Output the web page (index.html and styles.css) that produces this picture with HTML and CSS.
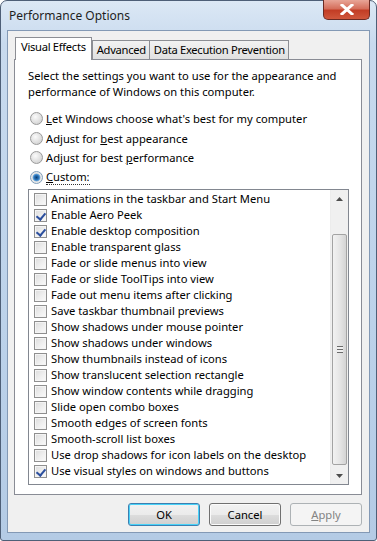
FILE: index.html
```html
<!DOCTYPE html>
<html lang="en">
<head>
    <meta charset="UTF-8">
    <title>Performance Options</title>
    <link rel="stylesheet" href="styles.css">
</head>
<body>
    <div class="window">
        <div class="titlebar">
            <span class="title">Performance Options</span>
            <div class="close">
                <svg width="14" height="11" viewBox="0 0 14 11"><path d="M2 1 L12 10 M12 1 L2 10" stroke="#fff" stroke-width="3" stroke-linecap="square"/></svg>
            </div>
        </div>
        <div class="client">
            <div class="tabs">
                <div class="tab active">Visual Effects</div>
                <div class="tab">Advanced</div>
                <div class="tab">Data Execution Prevention</div>
            </div>
            <div class="panel">
                <p class="intro">Select the settings you want to use for the appearance and performance of Windows on this computer.</p>
                <div class="radios">
                    <label class="radio"><span class="dot"></span><span><u>L</u>et Windows choose what's best for my computer</span></label>
                    <label class="radio"><span class="dot"></span><span>Adjust for <u>b</u>est appearance</span></label>
                    <label class="radio"><span class="dot"></span><span>Adjust for best <u>p</u>erformance</span></label>
                    <label class="radio on"><span class="dot"></span><span class="focus"><u>C</u>ustom:</span></label>
                </div>
                <div class="listbox">
                    <ul class="items">
                        <li><span class="box"></span>Animations in the taskbar and Start Menu</li>
                        <li class="checked"><span class="box"></span>Enable Aero Peek</li>
                        <li class="checked"><span class="box"></span>Enable desktop composition</li>
                        <li><span class="box"></span>Enable transparent glass</li>
                        <li><span class="box"></span>Fade or slide menus into view</li>
                        <li><span class="box"></span>Fade or slide ToolTips into view</li>
                        <li><span class="box"></span>Fade out menu items after clicking</li>
                        <li><span class="box"></span>Save taskbar thumbnail previews</li>
                        <li><span class="box"></span>Show shadows under mouse pointer</li>
                        <li><span class="box"></span>Show shadows under windows</li>
                        <li><span class="box"></span>Show thumbnails instead of icons</li>
                        <li><span class="box"></span>Show translucent selection rectangle</li>
                        <li><span class="box"></span>Show window contents while dragging</li>
                        <li><span class="box"></span>Slide open combo boxes</li>
                        <li><span class="box"></span>Smooth edges of screen fonts</li>
                        <li><span class="box"></span>Smooth-scroll list boxes</li>
                        <li><span class="box"></span>Use drop shadows for icon labels on the desktop</li>
                        <li class="checked"><span class="box"></span>Use visual styles on windows and buttons</li>
                    </ul>
                    <div class="scrollbar">
                        <div class="arrow"><svg width="7" height="4" viewBox="0 0 7 4"><path d="M0 4 L3.5 0 L7 4 Z" fill="#4d4d4d"/></svg></div>
                        <div class="track">
                            <div class="thumb">
                                <span class="grip"></span>
                            </div>
                        </div>
                        <div class="arrow"><svg width="7" height="4" viewBox="0 0 7 4"><path d="M0 0 L3.5 4 L7 0 Z" fill="#4d4d4d"/></svg></div>
                    </div>
                </div>
            </div>
            <div class="buttons">
                <button class="btn default">OK</button>
                <button class="btn">Cancel</button>
                <button class="btn disabled"><u>A</u>pply</button>
            </div>
        </div>
    </div>
</body>
</html>
```

FILE: styles.css
```css
html, body {
    margin: 0;
    padding: 0;
}
body {
    width: 377px;
    height: 541px;
    overflow: hidden;
    font-family: "Noto Sans", "Open Sans", sans-serif;
    font-size: 11.2px;
    color: #000;
    background: #fff;
}
.window {
    box-sizing: border-box;
    width: 377px;
    height: 541px;
    border: 1px solid #4e5f77;
    border-radius: 7px 7px 3px 3px;
    background: linear-gradient(180deg, #dce8f5 0%, #c8daee 8%, #bcd2ea 60%, #b4cbe5 100%);
    padding: 0 6px 7px 6px;
    display: flex;
    flex-direction: column;
}
.titlebar {
    height: 29px;
    display: flex;
    justify-content: space-between;
    align-items: flex-start;
}
.title {
    margin: 6px 0 0 2px;
    font-size: 12px;
    color: #1e1e1e;
}
.close {
    width: 45px;
    height: 19px;
    margin-top: -1px;
    border: 1px solid #6b2a23;
    border-top: none;
    border-radius: 0 0 5px 5px;
    background: linear-gradient(180deg, #e8a597 0%, #d56f5c 45%, #c23d25 55%, #d0573c 100%);
    display: flex;
    align-items: center;
    justify-content: center;
}
.client {
    flex: 1;
    border: 1px solid #8399b5;
    background: #f0f0f0;
    padding: 6px 7px 0 6px;
    display: flex;
    flex-direction: column;
}
.tabs {
    display: flex;
    align-items: flex-end;
    padding-left: 1px;
    height: 22px;
    position: relative;
    z-index: 1;
    letter-spacing: -0.3px;
}
.tab {
    height: 18px;
    padding: 0 3px 0 4px;
    border: 1px solid #8c8e94;
    border-bottom: none;
    margin-left: -1px;
    background: linear-gradient(180deg, #f2f2f2, #e0e0e0);
    line-height: 18px;
}
.tab.active {
    height: 22px;
    padding: 0 5px 0 5px;
    margin-left: 0;
    margin-right: 1px;
    background: #fff;
    line-height: 18px;
    margin-bottom: -1px;
}
.panel {
    height: 434px;
    background: #fff;
    border: 1px solid #898c95;
    padding: 0 12px 0 13px;
}
.intro {
    margin: 8px 0 0 0;
    line-height: 16px;
}
.radios {
    margin-top: 9px;
    display: flex;
    flex-direction: column;
}
.radio {
    height: 19.5px;
    display: flex;
    align-items: center;
    padding-left: 2px;
}
.dot {
    box-sizing: border-box;
    width: 13px;
    height: 13px;
    border-radius: 50%;
    border: 1px solid #9a9a9a;
    background: radial-gradient(circle at 40% 35%, #fbfbfb 0%, #d8d8d8 70%, #c4c4c4 100%);
    margin-right: 3px;
}
.radio.on .dot {
    background: radial-gradient(circle, #0c3e71 0%, #2a74bb 30%, #6aa6d9 45%, #e6e6e6 55%, #f5f5f5 100%);
    border-color: #7f9db9;
}
.focus {
    border-bottom: 1px dotted #333;
    line-height: 14px;
}
.listbox {
    margin-top: 2px;
    height: 294px;
    border: 1px solid #828790;
    display: flex;
}
.items {
    flex: 1;
    list-style: none;
    margin: 0;
    padding: 1px 0 0 5px;
}
.items li {
    height: 16px;
    line-height: 16px;
    display: flex;
    align-items: center;
    white-space: nowrap;
}
.box {
    box-sizing: border-box;
    width: 13px;
    height: 13px;
    border: 1px solid #8f8f8f;
    background: linear-gradient(135deg, #dcdcdc 0%, #f0f0f0 60%, #fafafa 100%);
    box-shadow: inset 0 0 0 1px #f4f4f4;
    margin-right: 4px;
    position: relative;
}
.checked .box::after {
    content: "";
    position: absolute;
    left: 3px;
    top: 1px;
    width: 4px;
    height: 7px;
    border: solid #2c4f9e;
    border-width: 0 2px 2px 0;
    transform: rotate(40deg);
}
.scrollbar {
    width: 17px;
    background: #f0f0f0;
    border-left: 1px solid #ececec;
    display: flex;
    flex-direction: column;
}
.arrow {
    height: 17px;
    display: flex;
    align-items: center;
    justify-content: center;
}
.track {
    flex: 1;
    padding: 27px 1px 1px 1px;
    display: flex;
}
.thumb {
    flex: 1;
    border: 1px solid #a3a3a3;
    border-radius: 2px;
    background: linear-gradient(90deg, #f2f2f2 0%, #e6e6e6 50%, #d4d4d4 100%);
    display: flex;
    align-items: center;
    justify-content: center;
    margin-bottom: 1px;
}
.grip {
    width: 6px;
    height: 5px;
    border-top: 1px solid #6b6b6b;
    border-bottom: 1px solid #6b6b6b;
    background: linear-gradient(#f0f0f0 0 40%, #6b6b6b 40% 60%, #f0f0f0 60%);
}
.buttons {
    display: flex;
    justify-content: flex-end;
    gap: 9px;
    margin-top: 8px;
    padding-right: 0;
}
.btn {
    width: 72px;
    height: 23px;
    font: inherit;
    color: #000;
    border: 1px solid #707070;
    border-radius: 3px;
    background: linear-gradient(180deg, #f2f2f2 0%, #ebebeb 50%, #dddddd 51%, #cfcfcf 100%);
    box-shadow: inset 0 0 0 1px #fbfbfb;
    padding: 0;
}
.btn.default {
    border-color: #3c7fb1;
    box-shadow: inset 0 0 0 1px #48d2f8;
}
.btn.disabled {
    color: #838383;
    border-color: #adb2b5;
    background: #f4f4f4;
    box-shadow: none;
}
```
